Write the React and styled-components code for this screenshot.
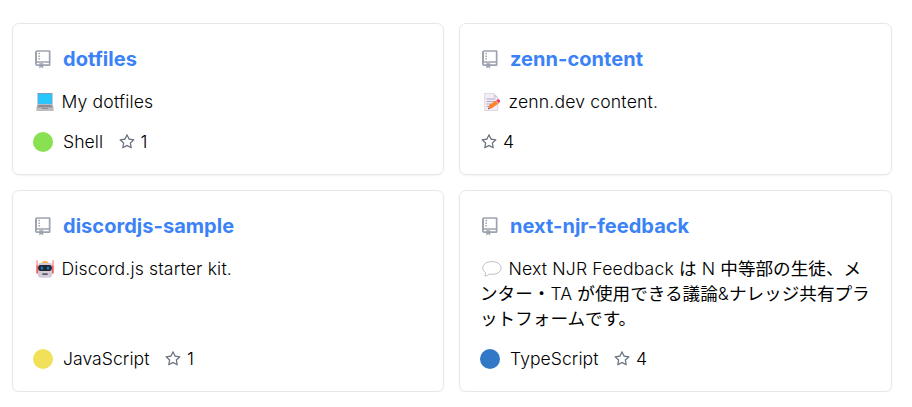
import React from "react";
import styled, { createGlobalStyle } from "styled-components";
import { AiOutlineStar } from "react-icons/ai";

const GlobalStyle = createGlobalStyle`
  *, *::before, *::after { box-sizing: border-box; }
  body {
    margin: 0;
    background: #fff;
    color: #000;
    font-family: Inter, "Noto Sans CJK JP", sans-serif;
    font-size: 17.6px;
    font-weight: 300;
  }
`;

const Grid = styled.main`
  display: grid;
  grid-template-columns: 432px 433px;
  grid-template-rows: 152px 202px;
  gap: 15px;
  padding: 23px 0 0 12px;
`;

const Card = styled.article`
  display: flex;
  flex-direction: column;
  padding: 20px 20px 19px;
  border: 1px solid #e5e7eb;
  border-radius: 7px;
  box-shadow: 0 1px 2px rgba(0, 0, 0, 0.05);
`;

const Heading = styled.h2`
  display: flex;
  align-items: center;
  height: 30px;
  margin: 0;
  font-size: 20px;
  font-weight: 700;
  letter-spacing: 0.04px;
`;

const RepoLink = styled.a`
  margin-left: 10px;
  color: #3b82f6;
  text-decoration: none;
`;

const RepoSvg = styled.svg`
  width: 20px;
  height: 20px;
  fill: #9ca3af;
`;

const Description = styled.p`
  margin: 15px 0 0;
  line-height: 25px;
  letter-spacing: 0.16px;
`;

const Japanese = styled.span`
  font-weight: 400;
  letter-spacing: 0;
`;

const EmojiSvg = styled.svg`
  display: inline-block;
  width: 18px;
  height: 18px;
  margin: 0 2.4px 0 3px;
  vertical-align: -3px;
  overflow: visible;
`;

const Meta = styled.footer`
  display: flex;
  align-items: center;
  height: 26px;
  margin-top: auto;
  line-height: 20px;
`;

const Label = styled.span`
  padding-bottom: 1px;
`;

const Language = styled.span`
  display: flex;
  align-items: center;
  gap: 10px;
  margin-right: 14.5px;
  letter-spacing: 0.04px;
`;

const Dot = styled.span`
  width: 20px;
  height: 20px;
  border-radius: 50%;
  background: ${(p) => p.$color};
`;

const Stars = styled.span`
  display: flex;
  align-items: center;
  gap: 5px;
`;

const StarIcon = styled(AiOutlineStar)`
  width: 18px;
  height: 18px;
  color: #6b7280;
`;

const RepoIcon = () => (
  <RepoSvg viewBox="0 0 20 20">
    <path
      fillRule="evenodd"
      d="M4 1.2h12.2a1.3 1.3 0 0 1 1.3 1.3v13.2a1.3 1.3 0 0 1-1.3 1.3H10.2v2.4l-2-1.4-1.9 1.4V17H4a2 2 0 0 1-2-2V3.2a2 2 0 0 1 2-2zM4 2.8v9.4h11.8V2.8zM3.8 13.7v1.6h2.5v-1.1h3.9v1.1h5.6v-1.6z"
    />
    <path d="M5.4 3.8h1.5v1.5H5.4zM5.4 6.4h1.5v1.5H5.4zM5.4 9h1.5v1.5H5.4z" />
  </RepoSvg>
);

const Laptop = () => (
  <EmojiSvg viewBox="0 0 18 18">
    <path fill="#8997ad" d="M1.5 0h15v11.5h-15z" />
    <path fill="#26c6ff" d="M2.2.8h13.6v10H2.2z" />
    <path fill="#aaa9ad" d="M1.5 11.5h15L17.6 15H.4z" />
    <path fill="#858389" d="M2.7 12.1h12.6v.7H2.7zM2.2 13.3h13.6v.7H2.2z" />
    <path fill="#bdbbbf" d="M.4 15h17.2v3H.4z" />
    <path fill="#908e94" d="M6 15h6v1H6z" />
  </EmojiSvg>
);

const Memo = () => (
  <EmojiSvg viewBox="0 0 18 18">
    <path fill="#f3edf7" stroke="#cbc2d2" strokeWidth=".6" d="M1.6.4h9.2l4 4v13.1H1.6z" />
    <path fill="#d2c8d9" d="M10.8.4v4h4z" />
    <path stroke="#aba2b7" strokeWidth=".9" d="M3.5 6h8.8M3.5 8.5h8.8M3.5 11h5M3.5 13.5h3" />
    <path fill="#ff822d" d="m6.1 12 7.7-5 2.1 3.3-7.5 5.1-3.1.7z" />
    <path fill="#f92f60" d="m13.4 7.2 1.6-1c1.3-.4 2.8 1.9 1.9 2.9l-1.5 1z" />
    <path fill="#eeb39b" d="m12.7 7.7.8-.5 2 3-.8.6z" />
    <path fill="#5a4450" d="m5.7 14.6-.7 1.7 1.7-.4z" />
  </EmojiSvg>
);

const Robot = () => (
  <EmojiSvg viewBox="0 0 18 18">
    <path fill="#f93c45" d="M.4 5.5h2.4v8H.4zM15.2 5.5h2.4v8h-2.4zM.6.3h.8v6H.6zM16.6.3h.8v6h-.8z" />
    <path fill="#ffb02e" d="M6 3V2q3-2 6 0v1z" />
    <path fill="#d3cad8" d="M4.8 2.8h8.4q3 0 3 3v8.5q0 3.5-3.5 3.5H5.3q-3.5 0-3.5-3.5V5.8q0-3 3-3z" />
    <rect x="2.2" y="5" width="13.6" height="6" rx="2.5" fill="#252229" />
    <path fill="#0084ce" d="M4.8 6.7h2.3v2.8H4.8zM10.9 6.7h2.3v2.8h-2.3z" />
    <path fill="#403744" d="M6.4 13.4h5.2v1.4H6.4z" />
  </EmojiSvg>
);

const Bubble = () => (
  <EmojiSvg viewBox="0 0 18 18">
    <path
      fill="#fff"
      stroke="#b5b5b5"
      strokeWidth=".9"
      d="M9 1.6C4 1.6-.2 4.2-.2 8.1c0 1.8 1 3.4 2.6 4.5.2 1.6 0 2.6-.6 3.4 2.2-.1 3.6-.9 4.4-1.9 6.1 1.1 11.8-1.5 11.8-6 0-3.9-4-6.5-9-6.5z"
    />
  </EmojiSvg>
);

const repos = [
  { name: "dotfiles", Emoji: Laptop, text: "My dotfiles", language: "Shell", color: "#89e051", stars: 1 },
  { name: "zenn-content", Emoji: Memo, text: "zenn.dev content.", stars: 4 },
  { name: "discordjs-sample", Emoji: Robot, text: "Discord.js starter kit.", language: "JavaScript", color: "#f1e05a", stars: 1 },
  {
    name: "next-njr-feedback",
    Emoji: Bubble,
    text: "Next NJR Feedback は N 中等部の生徒、メンター・TA が使用できる議論&ナレッジ共有プラットフォームです。",
    language: "TypeScript",
    color: "#3178c6",
    stars: 4,
  },
];

// Japanese runs are set in the regular weight beside the light Latin text.
const withJapanese = (text) =>
  text
    .split(/([\u3000-\u9fff]+)/)
    .map((run, i) => (i % 2 ? <Japanese key={i}>{run}</Japanese> : run));

export default function App() {
  return (
    <>
      <GlobalStyle />
      <Grid>
        {repos.map(({ name, Emoji, text, language, color, stars }) => (
          <Card key={name}>
            <Heading>
              <RepoIcon />
              <RepoLink>{name}</RepoLink>
            </Heading>
            <Description lang="ja">
              <Emoji /> {withJapanese(text)}
            </Description>
            <Meta>
              {language && (
                <Language>
                  <Dot $color={color} />
                  <Label>{language}</Label>
                </Language>
              )}
              <Stars>
                <StarIcon />
                <Label>{stars}</Label>
              </Stars>
            </Meta>
          </Card>
        ))}
      </Grid>
    </>
  );
}
